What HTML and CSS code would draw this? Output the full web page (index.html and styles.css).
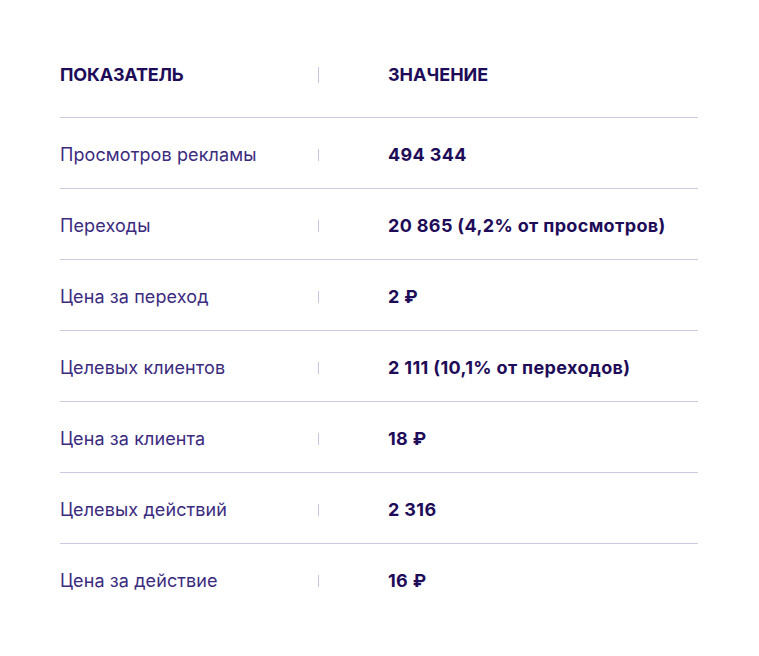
FILE: index.html
```html
<!DOCTYPE html>
<html lang="ru">
<head>
<meta charset="utf-8">
<link rel="stylesheet" href="styles.css">
</head>
<body>
<div class="table">
  <div class="row head">
    <div class="label">ПОКАЗАТЕЛЬ</div>
    <div class="sep"></div>
    <div class="value">ЗНАЧЕНИЕ</div>
  </div>
  <div class="row">
    <div class="label">Просмотров рекламы</div>
    <div class="sep"></div>
    <div class="value">494 344</div>
  </div>
  <div class="row">
    <div class="label">Переходы</div>
    <div class="sep"></div>
    <div class="value">20 865 (4,2% от просмотров)</div>
  </div>
  <div class="row">
    <div class="label">Цена за переход</div>
    <div class="sep"></div>
    <div class="value">2 ₽</div>
  </div>
  <div class="row">
    <div class="label">Целевых клиентов</div>
    <div class="sep"></div>
    <div class="value">2 111 (10,1% от переходов)</div>
  </div>
  <div class="row">
    <div class="label">Цена за клиента</div>
    <div class="sep"></div>
    <div class="value">18 ₽</div>
  </div>
  <div class="row">
    <div class="label">Целевых действий</div>
    <div class="sep"></div>
    <div class="value">2 316</div>
  </div>
  <div class="row last">
    <div class="label">Цена за действие</div>
    <div class="sep"></div>
    <div class="value">16 ₽</div>
  </div>
</div>
</body>
</html>
```
FILE: styles.css
```css
html, body {
  margin: 0;
  padding: 0;
  background: #ffffff;
}
body {
  font-family: Inter, "Liberation Sans", Arial, sans-serif;
  -webkit-font-smoothing: antialiased;
}
.table {
  width: 638px;
  margin-left: 60px;
  padding-top: 63px;
}
.row {
  display: flex;
  align-items: center;
  padding: 25px 0 21px 0;
  border-top: 1px solid #cdc9e0;
  font-size: 18px;
  line-height: 24px;
}
.row.head {
  border-top: none;
  padding: 0 0 30px 0;
}
.label {
  width: 258px;
  color: #3b2b7e;
  letter-spacing: 0.1px;
}
.sep {
  width: 0;
  height: 12px;
  border-left: 1px solid #c9c3e2;
}
.head .sep {
  height: 16px;
}
.value {
  margin-left: 69px;
  color: #1e0c58;
  font-weight: 700;
  letter-spacing: 0.35px;
}
.head .label {
  color: #1e0c58;
  font-weight: 700;
  letter-spacing: -0.2px;
}
.head .value {
  letter-spacing: 0;
}
```
